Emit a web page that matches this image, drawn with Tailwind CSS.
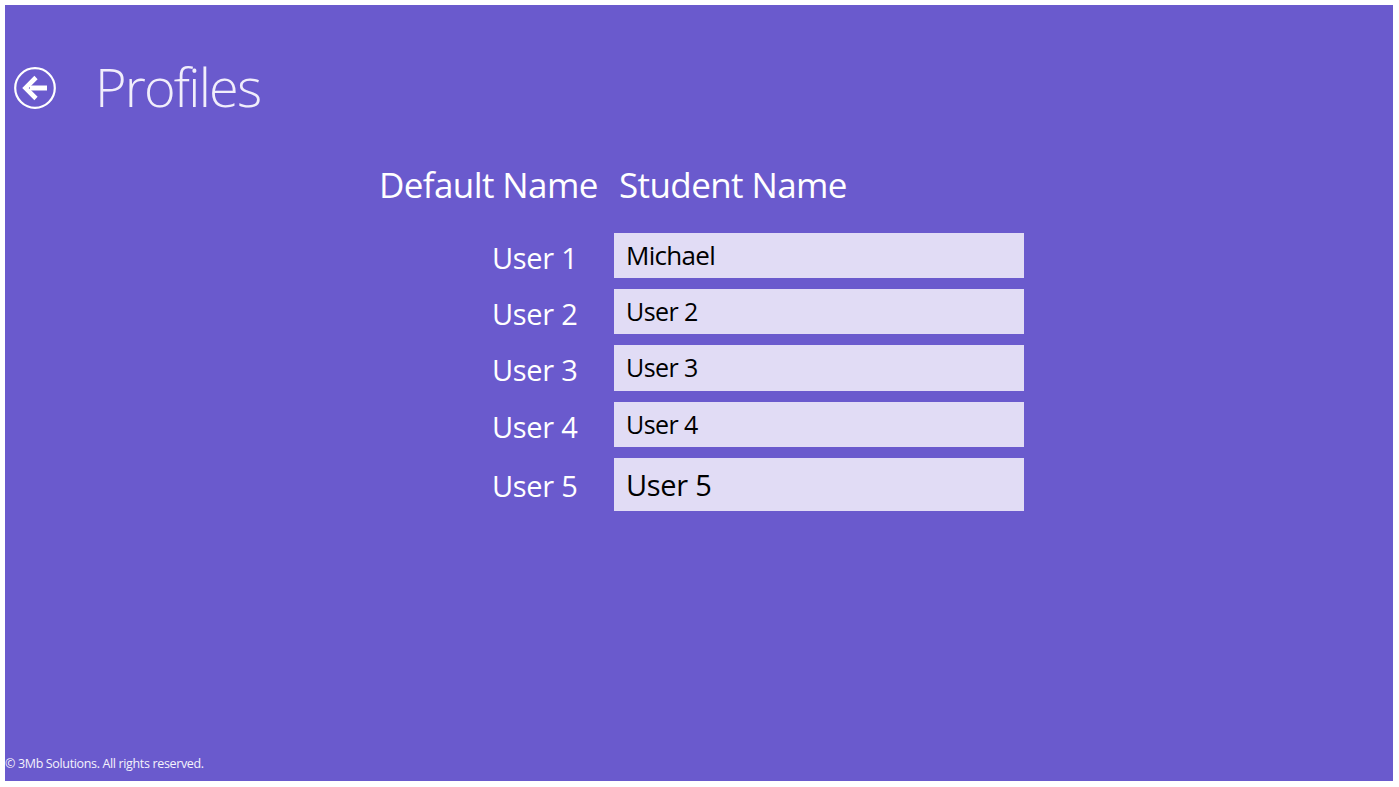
<!DOCTYPE html>
<html lang="en">
<head>
  <meta charset="UTF-8" />
  <title>Profiles</title>
  <script src="https://cdn.jsdelivr.net/npm/@tailwindcss/browser@4"></script>
</head>
<body class="bg-white h-[787px] w-[1399px] overflow-hidden pl-[5px] pt-[5px] pr-[6px] pb-[6px] font-['Open_Sans',sans-serif]">
  <div class="bg-[#6a5acd] h-full w-full flex flex-col text-white">
    <header class="flex items-center h-[62px] mt-[52px] pl-[9px]">
      <svg class="w-[42px] h-[42px] shrink-0" viewBox="0 0 42 42" fill="none">
        <circle cx="21" cy="21" r="19.8" stroke="#fff" stroke-width="2.2" />
        <path d="M33 21H16" stroke="#fff" stroke-width="5" />
        <path d="M22 10.5L11.5 21L22 31.5" stroke="#fff" stroke-width="4.6" />
      </svg>
      <h1 class="ml-[39px] pb-[5px] text-[54px] leading-[62px] font-light tracking-[-1.8px] text-[#f1eefb]">Profiles</h1>
    </header>

    <div class="flex mt-[42px] pl-[374px] text-[35px] leading-[48px] tracking-[-0.6px]">
      <div class="w-[240px]">Default Name</div>
      <div>Student Name</div>
    </div>

    <div class="flex flex-col gap-[11px] mt-[24px] pl-[487px]">
      <div class="flex items-center h-[45px]">
        <span class="w-[122px] pt-[4px] text-[29px] tracking-[-0.3px]">User 1</span>
        <div class="w-[410px] h-full bg-[#e1dcf5] text-black text-[26px] tracking-[-0.7px] pl-[12px] flex items-center">Michael</div>
      </div>
      <div class="flex items-center h-[45px]">
        <span class="w-[122px] pt-[4px] text-[29px] tracking-[-0.3px]">User 2</span>
        <div class="w-[410px] h-full bg-[#e1dcf5] text-black text-[25px] tracking-[-0.6px] pl-[12px] flex items-center">User 2</div>
      </div>
      <div class="flex items-center h-[46px]">
        <span class="w-[122px] pt-[4px] text-[29px] tracking-[-0.3px]">User 3</span>
        <div class="w-[410px] h-full bg-[#e1dcf5] text-black text-[25px] tracking-[-0.6px] pl-[12px] flex items-center">User 3</div>
      </div>
      <div class="flex items-center h-[45px]">
        <span class="w-[122px] pt-[4px] text-[29px] tracking-[-0.3px]">User 4</span>
        <div class="w-[410px] h-full bg-[#e1dcf5] text-black text-[25px] tracking-[-0.6px] pl-[12px] flex items-center">User 4</div>
      </div>
      <div class="flex items-center h-[53px]">
        <span class="w-[122px] pt-[2px] text-[29px] tracking-[-0.3px]">User 5</span>
        <div class="w-[410px] h-full bg-[#e1dcf5] text-black text-[29px] tracking-[-0.3px] pl-[12px] flex items-center">User 5</div>
      </div>
    </div>

    <footer class="mt-auto mb-[8px] text-[12.5px] leading-[18px] tracking-[-0.35px] text-[#f4f2fc]">© 3Mb Solutions. All rights reserved.</footer>
  </div>
</body>
</html>
